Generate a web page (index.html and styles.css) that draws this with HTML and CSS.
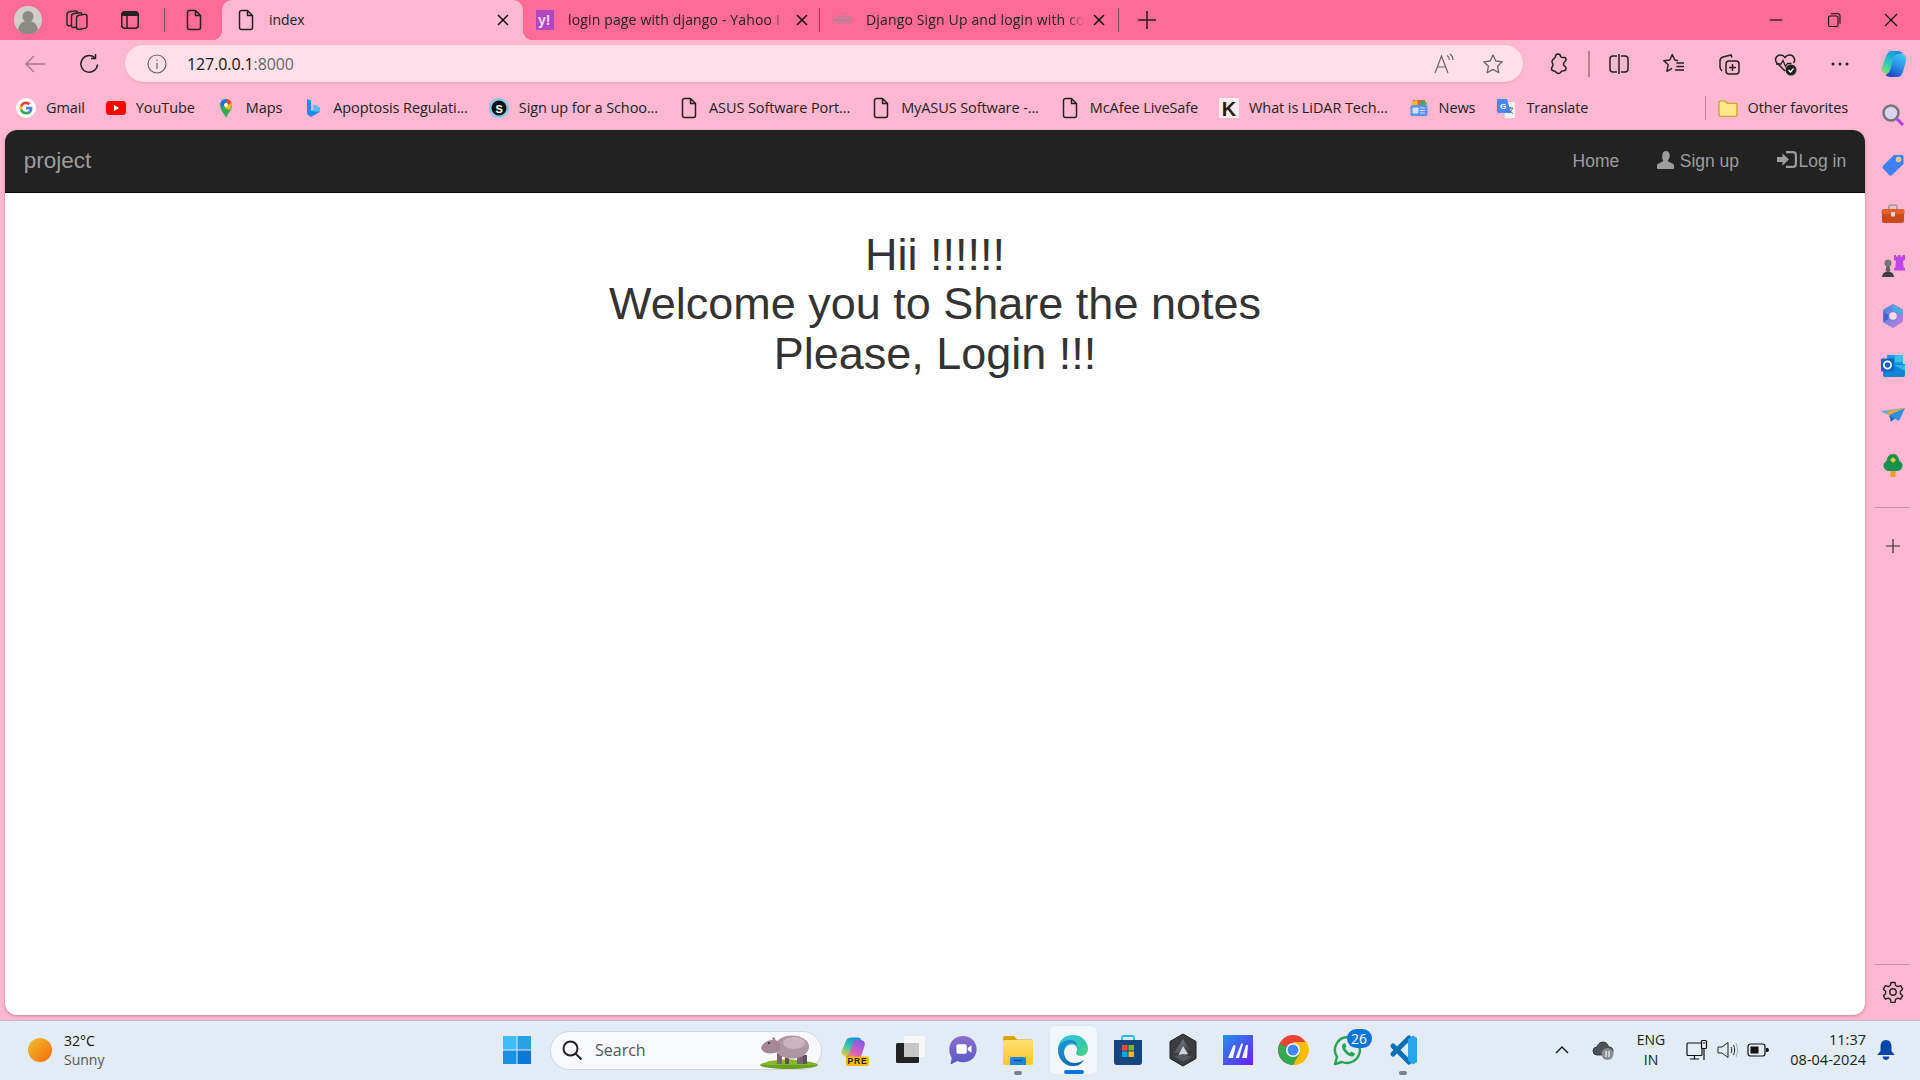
FILE: index.html
```html
<!DOCTYPE html>
<html lang="en">
<head>
<meta charset="utf-8">
<title>index</title>
<link rel="stylesheet" href="styles.css">
</head>
<body>
<svg class="defs" aria-hidden="true">
  <defs>
    <linearGradient id="gSun" x1="0" y1="0" x2="1" y2="1"><stop offset="0" stop-color="#f2c130"/><stop offset="1" stop-color="#f26a0c"/></linearGradient>
    <linearGradient id="gCopL" x1=".7" y1="0" x2=".2" y2="1"><stop offset="0" stop-color="#1a8fe0"/><stop offset=".55" stop-color="#2bc7c4"/><stop offset="1" stop-color="#7ee06a"/></linearGradient>
    <linearGradient id="gCopR" x1=".7" y1="0" x2=".2" y2="1"><stop offset="0" stop-color="#36c8ee"/><stop offset=".5" stop-color="#2b8ae6"/><stop offset="1" stop-color="#1c3fc0"/></linearGradient>
    <linearGradient id="gCopA" x1=".7" y1="0" x2=".1" y2="1"><stop offset="0" stop-color="#1a8fe0"/><stop offset=".5" stop-color="#36c8a8"/><stop offset="1" stop-color="#f4c83a"/></linearGradient>
    <linearGradient id="gCopC" x1=".8" y1="0" x2=".2" y2="1"><stop offset="0" stop-color="#7b5be6"/><stop offset=".6" stop-color="#d65fc0"/><stop offset="1" stop-color="#f08a70"/></linearGradient>
    <linearGradient id="gTeams" x1="0" y1="0" x2="0" y2="1"><stop offset="0" stop-color="#8a6fc8"/><stop offset="1" stop-color="#5a58c8"/></linearGradient>
    <linearGradient id="gEdge" x1="0" y1="0" x2="1" y2="1"><stop offset="0" stop-color="#35c1f1"/><stop offset=".55" stop-color="#35c8a8"/><stop offset="1" stop-color="#66d86a"/></linearGradient>
    <linearGradient id="gEdgeB" x1="0" y1="0" x2="1" y2="1"><stop offset="0" stop-color="#1f9be0"/><stop offset="1" stop-color="#0c59a4"/></linearGradient>
    <linearGradient id="gFold" x1="0" y1="0" x2="0" y2="1"><stop offset="0" stop-color="#ffe070"/><stop offset="1" stop-color="#fcc52c"/></linearGradient>
    <linearGradient id="gM" x1="0" y1="0" x2="1" y2="1"><stop offset="0" stop-color="#2590f0"/><stop offset="1" stop-color="#6a1ef0"/></linearGradient>
    <linearGradient id="gAsus" x1="0" y1="0" x2="1" y2="1"><stop offset="0" stop-color="#8a8e94"/><stop offset="1" stop-color="#2c2f33"/></linearGradient>
    <linearGradient id="gM365" x1="0" y1="0" x2="1" y2="1"><stop offset="0" stop-color="#3d8be0"/><stop offset="1" stop-color="#c67ae0"/></linearGradient>
    <symbol id="doc" viewBox="0 0 20 24"><path d="M3.500 4.500a2 2 0 0 1 2-2h6l5 5v12a2 2 0 0 1-2 2h-9a2 2 0 0 1-2-2zM11.500 2.500v5h5" fill="none" stroke="#222" stroke-width="1.500" stroke-linejoin="round"/></symbol>
    <symbol id="close" viewBox="0 0 20 20"><path d="M5 5l10 10M15 5L5 15" fill="none" stroke="#111" stroke-width="1.500"/></symbol>
  </defs>
</svg>

<header class="tabstrip">
  <div class="cell c-avatar">
    <svg class="i28" viewBox="0 0 28 28"><circle cx="14" cy="14" r="14" fill="#cfcfc8"/><circle cx="14" cy="10.500" r="5.500" fill="#8b8b86"/><path d="M4 24c1-7 5-9 10-9s9 2 10 9a14 14 0 0 1-20 0z" fill="#8b8b86"/></svg>
  </div>
  <div class="cell c-work">
    <svg class="i24" viewBox="0 0 24 24" fill="#ff6b99" stroke="#222" stroke-width="1.400"><g transform="skewY(-9)"><rect x="2" y="4.500" width="10.500" height="14" rx="2.500"/><rect x="6.500" y="7" width="10.500" height="14" rx="2.500"/><rect x="11.500" y="9.500" width="10.500" height="14" rx="2.500"/></g></svg>
  </div>
  <div class="cell c-tabs">
    <svg class="i22" viewBox="0 0 22 22"><rect x="2.750" y="2.750" width="16.500" height="16.500" rx="3" fill="none" stroke="#222" stroke-width="1.500"/><path d="M2.750 5.500a3 3 0 0 1 3-3h10.500a3 3 0 0 1 3 3V7H2.750z" fill="#222"/><path d="M8 7v12" stroke="#222" stroke-width="1.500"/></svg>
  </div>
  <span class="vline"></span>
  <div class="cell c-pin"><svg class="i-doc"><use href="#doc"/></svg></div>
  <div class="tab active">
    <svg class="i-doc"><use href="#doc"/></svg>
    <span class="tab-title">index</span>
    <svg class="i-close"><use href="#close"/></svg>
  </div>
  <div class="tab t2">
    <svg class="fav18" viewBox="0 0 18 20"><rect width="18" height="20" fill="#b146c2"/><text x="2" y="15" class="yahoo">y!</text></svg>
    <span class="tab-title fade">login page with django - Yahoo I</span>
    <svg class="i-close"><use href="#close"/></svg>
  </div>
  <div class="tab t3">
    <svg class="fav20" viewBox="0 0 20 20" fill="none" stroke="#a98794" stroke-width="1.500"><path d="M1 10h18M9.500 7.500C8 5.500 4 5.500 2.800 8c-1 2.500.5 5 3.200 5 2 0 3.500-1.500 3.500-3M10.500 7.500C12 5.500 16 5.500 17.200 8c1 2.500-.5 5-3.200 5-2 0-3.500-1.500-3.500-3"/></svg>
    <span class="tab-title fade">Django Sign Up and login with co</span>
    <svg class="i-close"><use href="#close"/></svg>
  </div>
  <div class="cell c-plus"><svg class="i22" viewBox="0 0 22 22"><path d="M11 2v18M2 11h18" stroke="#222" stroke-width="1.500"/></svg></div>
  <div class="win-controls">
    <div class="cell c-win"><svg class="i16" viewBox="0 0 16 16"><path d="M2 8h12" stroke="#111" stroke-width="1.200"/></svg></div>
    <div class="cell c-win"><svg class="i16" viewBox="0 0 16 16" fill="none" stroke="#111" stroke-width="1.100"><rect x="2.500" y="4" width="9.500" height="10.500" rx="1.500"/><path d="M5 1.800h7a2 2 0 0 1 2 2v8"/></svg></div>
    <div class="cell c-win"><svg class="i16" viewBox="0 0 16 16"><path d="M2 2l12 12M14 2L2 14" stroke="#111" stroke-width="1.200"/></svg></div>
  </div>
</header>

<nav class="toolbar">
  <div class="cell c-back"><svg class="i24" viewBox="0 0 24 24" fill="none" stroke="#a9798a" stroke-width="1.500"><path d="M22 12H3M11 4l-8 8 8 8"/></svg></div>
  <div class="cell c-reload"><svg class="i24" viewBox="0 0 24 24" fill="none" stroke="#222" stroke-width="1.500"><path d="M19.500 12.500a8.300 8.300 0 1 1-3-7M17.500 2v4.500H13"/></svg></div>
  <div class="address">
    <svg class="i22 info" viewBox="0 0 22 22" fill="none" stroke="#666" stroke-width="1.200"><circle cx="11" cy="11" r="9"/><path d="M11 10v6M11 6.500v1.500"/></svg>
    <span class="url">127.0.0.1<span class="port">:8000</span></span>
    <span class="grow"></span>
    <svg class="i24" viewBox="0 0 24 24" fill="none" stroke="#666" stroke-width="1.200"><path d="M3 21L9.500 4 16 21M5.300 15h8.500M15 3.500c1.500 1 2.500 2.500 2.500 4.500M18 2c2 1.500 3 3.500 3 6"/></svg>
    <svg class="i24 star" viewBox="0 0 24 24" fill="none" stroke="#666" stroke-width="1.300"><path d="M12 3l2.800 6 6.500.8-4.800 4.400 1.300 6.500L12 17.400l-5.800 3.300 1.300-6.500L2.700 9.800 9.200 9z" stroke-linejoin="round"/></svg>
  </div>
  <div class="cell c-ext"><svg class="i24" viewBox="0 0 24 24" fill="none" stroke="#222" stroke-width="1.500"><path d="M9.500 4.500a2.500 2.500 0 0 1 5 0c0 1 2.500 1 4 1 1.200 0 1.500 1 1.500 2 0 1.500-1 2-1.500 2.500a2.500 2.500 0 0 0 0 4c.8.600 1.500 1 1.500 2.500 0 2-2 2.500-4 2.500-1 0-1 2.500-3.500 2.500s-3-2.500-4-2.500c-1.500 0-3-.5-3-2.500 0-1.500 1.500-2 1.500-3.500S6 11 6 9.500c0-2.500 3.500-3 3.500-5z" stroke-linejoin="round"/></svg></div>
  <span class="vline v2"></span>
  <div class="cell c-tool"><svg class="i24" viewBox="0 0 24 24" fill="none" stroke="#222" stroke-width="1.500"><path d="M10 4H6a3 3 0 0 0-3 3v10a3 3 0 0 0 3 3h4M14 4h4a3 3 0 0 1 3 3v10a3 3 0 0 1-3 3h-4M12 2v20"/></svg></div>
  <div class="cell c-tool"><svg class="i24" viewBox="0 0 24 24" fill="none" stroke="#222" stroke-width="1.400"><path d="M16 8.700L12.800 8 10.300 2.500 7.800 8l-6 .8 4.400 4-1.300 6.500 5.200-3" stroke-linejoin="round"/><path d="M14.500 11h7.500M14.500 14.500h7.500M13 18h9"/></svg></div>
  <div class="cell c-tool"><svg class="i24" viewBox="0 0 24 24" fill="none" stroke="#222" stroke-width="1.500"><rect x="9" y="9" width="13" height="13" rx="3"/><path d="M15.500 12v7M12 15.500h7M15 5.500l-1-2.500-8 2c-2 .5-3 2-3 4v6c0 1.500 1 3 2 4"/></svg></div>
  <div class="cell c-tool"><svg class="i24" viewBox="0 0 24 24"><path d="M12 19L4 11c-3-3-1-8 3.500-8 2 0 3.500 1 4.500 2.500C13 4 14.500 3 16.500 3 21 3 23 8 20.500 11" fill="none" stroke="#222" stroke-width="1.500"/><path d="M3 12h5l2-3.500 2.500 6 2-3h4" fill="none" stroke="#222" stroke-width="1.300"/><circle cx="18" cy="18" r="5.500" fill="#222"/><path d="M15.500 18l2 2 3-3.500" fill="none" stroke="#fff" stroke-width="1.200"/></svg></div>
  <div class="cell c-tool"><svg class="i24" viewBox="0 0 24 24" fill="#222"><circle cx="5" cy="12" r="1.500"/><circle cx="12" cy="12" r="1.500"/><circle cx="19" cy="12" r="1.500"/></svg></div>
  <div class="cell c-copilot"><svg class="i30" viewBox="0 0 30 30"><path d="M19 2h-6c-3 0-5 2-6 5L3 18c-1 4 1 7 5 7h3c2 0 4-2 4.500-4l3-11c.8-3 2.500-5 5-6-1-1.300-2.500-2-4.500-2z" fill="url(#gCopL)"/><path d="M11 28h7c3 0 5-2 6-5l3-11c1-4-1-7-5-7h-3c-2 0-4 2-4.500 4l-3 11c-.8 3-2.500 5-5 6 1 1.300 3 2 5 2z" fill="url(#gCopR)"/></svg></div>
</nav>

<div class="content-row">
  <div class="content-col">
    <div class="bookmarks">
      <a class="bm"><svg class="fav" viewBox="0 0 20 20"><circle cx="10" cy="10" r="10" fill="#fff"/><path d="M16.400 10.200c0-.5 0-.9-.1-1.400H10v2.600h3.600c-.2.800-.6 1.500-1.300 2v1.700h2.100c1.300-1.200 2-2.900 2-4.900z" fill="#4285f4"/><path d="M10 16.500c1.800 0 3.300-.6 4.400-1.600l-2.100-1.700c-.6.400-1.300.6-2.300.6-1.700 0-3.200-1.200-3.700-2.700H4.100v1.700c1.100 2.200 3.300 3.700 5.900 3.700z" fill="#34a853"/><path d="M6.300 11.100c-.3-.7-.3-1.500 0-2.200V7.200H4.100c-.7 1.500-.7 4.100 0 5.600z" fill="#fbbc05"/><path d="M10 6.200c1 0 1.800.3 2.500 1l1.900-1.900C13.300 4.200 11.800 3.500 10 3.500c-2.600 0-4.800 1.500-5.900 3.700l2.200 1.700c.5-1.500 2-2.700 3.700-2.700z" fill="#ea4335"/></svg><span>Gmail</span></a>
      <a class="bm"><svg class="fav" viewBox="0 0 20 20"><rect y="3" width="20" height="14" rx="3.500" fill="#f00"/><path d="M8 7l5 3-5 3z" fill="#fff"/></svg><span>YouTube</span></a>
      <a class="bm"><svg class="fav" viewBox="0 0 20 20"><path d="M10 20C8 15 4 12 4 7a6 6 0 0 1 12 0c0 5-4 8-6 13z" fill="#34a853"/><path d="M4.600 4.500A6 6 0 0 1 10 1v4.500L6 9.500C5 8 4.300 6 4.600 4.500z" fill="#1a73e8"/><path d="M10 1a6 6 0 0 1 5.500 3.500L12 8z" fill="#ea4335"/><path d="M15.500 4.500c.8 2.500 0 4.500-2 7.500L8.500 10z" fill="#fbbc05"/><circle cx="10" cy="7" r="2" fill="#fff"/></svg><span>Maps</span></a>
      <a class="bm"><svg class="fav" viewBox="0 0 20 20"><path d="M4 1l4 1.500v10.500l4-2.300-2-1 1-3 6 3v4L8 19l-4-3z" fill="#1f8ce6"/><path d="M8 13l4-2.300-2-1 1-3 6 3v4z" fill="#4fc3f0"/></svg><span>Apoptosis Regulati...</span></a>
      <a class="bm"><svg class="fav" viewBox="0 0 20 20"><circle cx="10" cy="10" r="10" fill="#7ec8e8"/><circle cx="10" cy="10" r="7.500" fill="#111"/><text x="10" y="14.500" class="skool">S</text></svg><span>Sign up for a Schoo...</span></a>
      <a class="bm"><svg class="fav tall"><use href="#doc"/></svg><span>ASUS Software Port...</span></a>
      <a class="bm"><svg class="fav tall"><use href="#doc"/></svg><span>MyASUS Software -...</span></a>
      <a class="bm"><svg class="fav tall"><use href="#doc"/></svg><span>McAfee LiveSafe</span></a>
      <a class="bm"><svg class="fav" viewBox="0 0 20 20"><rect width="20" height="20" fill="#f7ecec"/><text x="10" y="17.500" class="kay">K</text></svg><span>What is LiDAR Tech...</span></a>
      <a class="bm"><svg class="fav" viewBox="0 0 20 20"><path d="M4 2h12v5H4z" fill="#ea5a47"/><path d="M2 4l6-2 1 5H3z" fill="#f1bc31"/><path d="M12 2l6 3-1 2h-6z" fill="#3ab05a"/><rect x="1.500" y="7" width="17" height="11" rx="1.500" fill="#5b92ee"/><path d="M4 10h5v5H4zM11 10h5M11 12.500h5M11 15h5" fill="#cfe0fb" stroke="#cfe0fb"/></svg><span>News</span></a>
      <a class="bm"><svg class="fav" viewBox="0 0 20 20"><path d="M7 4h12v16H9z" fill="#eceff3"/><path d="M1 1h10l4 14H3a2 2 0 0 1-2-2z" fill="#4a86ec"/><text x="7" y="11" class="gee">G</text><path d="M12 10h5M14.500 9v1.500M13 15c2-1 3-3 3.500-5M13.500 12c.5 1.500 2 3 3.500 3.500" fill="none" stroke="#666" stroke-width=".9"/></svg><span>Translate</span></a>
      <span class="grow"></span>
      <span class="vline v3"></span>
      <a class="bm last"><svg class="fav" viewBox="0 0 20 20"><path d="M1 4.500A1.500 1.500 0 0 1 2.500 3H7l2 2.200h8.500A1.500 1.500 0 0 1 19 6.700v10a1.500 1.500 0 0 1-1.500 1.500h-15A1.500 1.500 0 0 1 1 16.700z" fill="#fde78b" stroke="#c8951b" stroke-width="1.100"/></svg><span>Other favorites</span></a>
    </div>
    <main class="page">
      <div class="navbar">
        <a class="brand">project</a>
        <span class="grow"></span>
        <a class="nav-link">Home</a>
        <a class="nav-link"><svg class="glyph g-user" viewBox="0 0 18 18" fill="#9d9d9d"><path d="M9 0c2.400 0 3.700 2 3.700 4.500 0 2-.7 3.700-1.700 4.700-.4.400-.3 1.100.3 1.400l4.200 2c1 .5 1.500 1.200 1.500 2.400v2.500c0 .3-.2.500-.5.500H.5c-.3 0-.5-.2-.5-.5V15c0-1.200.5-1.900 1.500-2.400l4.200-2c.6-.3.700-1 .3-1.400C5 8.200 5.300 6.500 5.300 4.500 5.300 2 6.600 0 9 0z"/></svg>Sign up</a>
        <a class="nav-link"><svg class="glyph g-login" viewBox="0 0 20 17" fill="#9d9d9d"><path d="M0 6h5.500V2.500L12 8.500l-6.500 6V11H0z"/><path d="M9 0h7a4 4 0 0 1 4 4v9a4 4 0 0 1-4 4H9v-2.200h7a1.800 1.800 0 0 0 1.800-1.800V4A1.800 1.800 0 0 0 16 2.200H9z"/></svg>Log in</a>
      </div>
      <h1 class="welcome">Hii !!!!!!<br>Welcome you to Share the notes<br>Please, Login !!!</h1>
    </main>
  </div>
  <aside class="sidebar">
    <div class="cell side"><svg class="i26" viewBox="0 0 26 26"><circle cx="11" cy="11" r="7.500" fill="#dcd4ee" stroke="#75757d" stroke-width="2.500"/><path d="M17 17l6 6" stroke="#b23fe6" stroke-width="3"/></svg></div>
    <div class="cell side"><svg class="i26" viewBox="0 0 26 26"><path d="M14 3h8a1.500 1.500 0 0 1 1.500 1.500V12L12 23a2 2 0 0 1-2.800 0L3 16.500a2 2 0 0 1 0-2.800z" fill="#3f7ff0"/><circle cx="18.500" cy="7.500" r="2.400" fill="#f5c33b" stroke="#dbe6ff" stroke-width=".7"/></svg></div>
    <div class="cell side"><svg class="i26" viewBox="0 0 26 26"><path d="M9 7V4.500A1.500 1.500 0 0 1 10.500 3h5A1.500 1.500 0 0 1 17 4.500V7" fill="none" stroke="#9a9a9a" stroke-width="1.600"/><path d="M1.500 9A2 2 0 0 1 3.500 7h19a2 2 0 0 1 2 2v3h-23z" fill="#e3602a"/><path d="M2 12h22v7a2 2 0 0 1-2 2H4a2 2 0 0 1-2-2z" fill="#c94a1c"/><rect x="11" y="10" width="4" height="4.500" rx=".8" fill="#d8d8d8"/></svg></div>
    <div class="cell side"><svg class="i26" viewBox="0 0 26 26"><path d="M14 2h2v1.500h2V2h2.500v1.500h2V2H25v5l-2 1 .8 7H25v2.500H14V15h1.200L16 8l-2-1z" fill="#c044ea"/><circle cx="8" cy="10" r="3.500" fill="#75757a"/><path d="M6.500 13h3l1 5h-5z" fill="#5f6064"/><path d="M2 24c0-3 2-5 6-6 4 1 6 3 6 6z" fill="#3d3e42"/></svg></div>
    <div class="cell side"><svg class="i26" viewBox="0 0 26 26"><path d="M13 1.500l9.500 5v12L13 24.500 3.500 19V7z" fill="url(#gM365)" stroke="url(#gM365)" stroke-width="1" stroke-linejoin="round"/><path d="M13 2l9 5v5l-9-4.500z" fill="#3fb3dd"/><path d="M3.500 9l5 3v4l-5 3z" fill="#2d6fd0"/><circle cx="13" cy="13" r="3.800" fill="#fdd8e6"/></svg></div>
    <div class="cell side"><svg class="i26" viewBox="0 0 26 26"><rect x="7" y="2" width="16" height="11" fill="#1a9be0"/><rect x="15" y="2" width="8" height="7" fill="#38c0ee"/><path d="M3 11l12 0 10 0v11a2 2 0 0 1-2 2H5.500A2 2 0 0 1 3 22z" fill="#1085d6"/><path d="M14 12l11 6v-6z" fill="#36b0ea"/><rect x="1" y="5.500" width="13" height="13" rx="1.500" fill="#0a64c0"/><circle cx="7.500" cy="12" r="3.600" fill="none" stroke="#fff" stroke-width="1.700"/></svg></div>
    <div class="cell side"><svg class="i26" viewBox="0 0 26 26"><path d="M1 8l24-3-16 7z" fill="#41aef0"/><path d="M25 5L9 12l10 6z" fill="#2a8fe0"/><path d="M6 8.500L25 5 9 12z" fill="#f2a32c"/><path d="M9 12l2 7 4-3.500z" fill="#1c6fc8"/></svg></div>
    <div class="cell side"><svg class="i26" viewBox="0 0 26 26"><rect x="10.500" y="17" width="5" height="7" rx="1" fill="#f09a20"/><path d="M13 1c4 0 6 3.500 6.500 7 2 1 3 3 3 4.500 0 3-2.500 5.500-5.500 5.500H9c-3 0-5.500-2.500-5.500-5.500 0-1.500 1-3.500 3-4.500C7 4.500 9 1 13 1z" fill="#179150"/><path d="M13 4l1.500 1.500L16 7l-1.500 1.500L13 10l-1.500-1.500L10 7l1.500-1.500z" fill="#f5c332"/></svg></div>
    <span class="hline first"></span>
    <div class="cell side add"><svg class="i16" viewBox="0 0 16 16"><path d="M8 1v14M1 8h14" stroke="#333" stroke-width="1.200"/></svg></div>
    <span class="grow"></span>
    <span class="hline"></span>
    <div class="cell side gear"><svg class="i24" viewBox="0 0 24 24" fill="none" stroke="#222" stroke-width="1.400"><circle cx="12" cy="12" r="3.200"/><path d="M10 2.500h4l.6 3 2.200 1.200 2.800-1 2 3.500-2.200 2v2.500l2.200 2-2 3.500-2.800-1-2.200 1.200-.6 3h-4l-.6-3-2.200-1.200-2.800 1-2-3.500 2.200-2v-2.500l-2.200-2 2-3.500 2.800 1 2.200-1.200z" stroke-linejoin="round"/></svg></div>
  </aside>
</div>

<footer class="taskbar">
  <div class="weather">
    <svg class="i24" viewBox="0 0 24 24"><circle cx="12" cy="12" r="12" fill="url(#gSun)"/></svg>
    <div class="two-line"><span class="dark">32°C</span><span class="muted">Sunny</span></div>
  </div>
  <div class="start"><svg class="i30" viewBox="0 0 30 30"><rect x="1" y="1" width="13.500" height="13.500" fill="#40bdf7"/><rect x="15.500" y="1" width="13.500" height="13.500" fill="#2aa0e8"/><rect x="1" y="15.500" width="13.500" height="13.500" fill="#1a92e4"/><rect x="15.500" y="15.500" width="13.500" height="13.500" fill="#0a78d4"/></svg></div>
  <div class="search">
    <svg class="i22" viewBox="0 0 22 22" fill="none" stroke="#222" stroke-width="2"><circle cx="9.500" cy="9.500" r="7"/><path d="M14.500 14.500l6 6"/></svg>
    <span class="search-text">Search</span>
    <span class="grow"></span>
    <svg class="hippo" viewBox="0 0 60 36"><ellipse cx="30" cy="32" rx="29" ry="4" fill="#6aa022"/><path d="M2 32l8-4 20-2 22 3 6 3z" fill="#86b82e"/><rect x="18" y="20" width="5" height="11" fill="#7b6470"/><rect x="38" y="20" width="6" height="11" fill="#7b6470"/><rect x="26" y="22" width="4" height="9" fill="#66505c"/><rect x="44" y="22" width="4" height="9" fill="#66505c"/><ellipse cx="33" cy="14" rx="17" ry="11.500" fill="#b096a2"/><ellipse cx="35" cy="10" rx="11" ry="6" fill="#cdb4bf"/><path d="M2 15c1-4 5-7 10-8 4-1 8 1 9 5 1 5-2 8-6 8-4 1-11 1-13-5z" fill="#a58796"/><circle cx="10" cy="10" r="1" fill="#222"/><path d="M13 6l2-2 1.500 3z" fill="#7b6470"/></svg>
  </div>
  <div class="tb-icons">
    <div class="cell tb"><svg class="i36" viewBox="0 0 36 36"><g transform="translate(4 4) scale(.95 .8)"><path d="M19 2h-6c-3 0-5 2-6 5L3 18c-1 4 1 7 5 7h3c2 0 4-2 4.500-4l3-11c.8-3 2.500-5 5-6-1-1.300-2.500-2-4.500-2z" fill="url(#gCopA)"/><path d="M11 28h7c3 0 5-2 6-5l3-11c1-4-1-7-5-7h-3c-2 0-4 2-4.500 4l-3 11c-.8 3-2.500 5-5 6 1 1.300 3 2 5 2z" fill="url(#gCopC)"/></g><rect x="11" y="24.500" width="23" height="9.500" rx="2" fill="#fbb90f"/><text x="22.500" y="32.300" class="pre">PRE</text></svg></div>
    <div class="cell tb"><svg class="i34" viewBox="0 0 34 34"><rect x="5" y="10" width="23" height="20" rx="1.500" fill="#222"/><rect x="13" y="3" width="21" height="21" rx="1.500" fill="#f8f8f8"/><rect x="13" y="10" width="15" height="14" rx="1" fill="#c6c6c6"/></svg></div>
    <div class="cell tb"><svg class="i32" viewBox="0 0 34 34"><path d="M17 2c8.500 0 14.500 6 14.500 14S25.500 30 17 30c-2 0-4-.4-6-1.300L5 32c-.6.300-1.200-.2-1-.9l1-5.600C3.500 23 2.500 20 2.500 16 2.500 8 8.500 2 17 2z" fill="url(#gTeams)"/><rect x="10" y="11" width="11" height="10" rx="2" fill="#fff"/><path d="M22 15l4-3v8l-4-3z" fill="#fff"/></svg></div>
    <div class="cell tb"><svg class="i34" viewBox="0 0 34 34"><path d="M2 5a2 2 0 0 1 2-2h9l3 3.500h14a2 2 0 0 1 2 2V10H2z" fill="#dba30f"/><rect x="2" y="7" width="30" height="25" rx="1.500" fill="url(#gFold)"/><path d="M9 26a2 2 0 0 1 2-2h12a2 2 0 0 1 2 2v6H9z" fill="#1a87d6"/><path d="M13 27.500h8" stroke="#0b4f90" stroke-width="1.300"/></svg><span class="run-dot"></span></div>
    <div class="cell tb selected"><svg class="i32" viewBox="0 0 32 32"><path d="M16 1C24 1 31 7 31 15c0 4-3 7-7 7-3 0-5-1-5-3 0-1 1-1.500 1-3.500 0-3-2-5-5-5-5 0-8 4-8 9 0 7 5 12 11 13C9 33 1 26 1 16 1 7 7 1 16 1z" fill="url(#gEdge)"/><path d="M1 16c0-6 6-10 12-10 5 0 7 3 7 6-2-2-3-3-5-3-5 0-8 4-8 9 0 5 3 11 11 11 3 0 6-1 9-3-3 5-7 6-11 6C8 32 1 25 1 16z" fill="url(#gEdgeB)"/></svg><span class="run-bar"></span></div>
    <div class="cell tb"><svg class="i32" viewBox="0 0 32 32"><path d="M10 7V3.500A1.500 1.500 0 0 1 11.500 2h9A1.500 1.500 0 0 1 22 3.500V7" fill="none" stroke="#2bbdf0" stroke-width="1.800"/><path d="M2 6h28v22a3 3 0 0 1-3 3H5a3 3 0 0 1-3-3z" fill="#15467f"/><rect x="10" y="11" width="5.500" height="5.500" fill="#f25022"/><rect x="16.500" y="11" width="5.500" height="5.500" fill="#7fba00"/><rect x="10" y="17.500" width="5.500" height="5.500" fill="#00a4ef"/><rect x="16.500" y="17.500" width="5.500" height="5.500" fill="#ffb900"/></svg></div>
    <div class="cell tb"><svg class="i34" viewBox="0 0 34 34"><path d="M17 1l13 7.500v17L17 33 4 25.500v-17z" fill="#3a3c40" stroke="#1e2023" stroke-width="1"/><path d="M17 6l9 14H8z" fill="url(#gAsus)"/><path d="M17 13l5 8-10 2z" fill="#d0d2d5"/><path d="M8 23l9-2 9 3-9 5z" fill="#54575c"/></svg></div>
    <div class="cell tb"><svg class="i30" viewBox="0 0 30 30"><rect width="30" height="30" fill="url(#gM)"/><path d="M5 23l5-12c1-2 3-1 2.500 1L10 23zM12.500 23l6-15 1.500 1-4 14zM19 23l4-13h2l-1 13z" fill="#f2f5ff"/></svg></div>
    <div class="cell tb"><svg class="i32" viewBox="0 0 32 32"><circle cx="16" cy="16" r="15" fill="#ea4335"/><path d="M16 16L2.500 9.500A15 15 0 0 0 16 31l7-12z" fill="#34a853"/><path d="M16 8h13.500A15 15 0 0 1 16 31l7-12z" fill="#fbbc05"/><circle cx="16" cy="16" r="7" fill="#fff"/><circle cx="16" cy="16" r="5.500" fill="#4285f4"/></svg></div>
    <div class="cell tb"><svg class="i32" viewBox="0 0 32 32" fill="none"><path d="M16 3a13 13 0 0 0-11 20l-2 7 7-2A13 13 0 1 0 16 3z" stroke="#27a553" stroke-width="2.400" stroke-linejoin="round"/><path d="M11 10c-2 2-1 5 2 8.500s6.500 5 9 3.500l1-2.500-3.500-2-1.500 1.500c-1.500-.5-4-3-5-5l1.500-1.500-1.500-3.500z" fill="#27a553"/></svg><span class="badge">26</span></div>
    <div class="cell tb"><svg class="i32" viewBox="0 0 32 32"><path d="M22 4L6 20M6 12l16 16" fill="none" stroke="#0a70b8" stroke-width="5" stroke-linecap="round"/><path d="M21 5l5-3.500 4 2.500v24l-4 2.500-5-3.500z" fill="#28a4ec"/></svg><span class="run-dot"></span></div>
  </div>
  <span class="grow"></span>
  <div class="tray">
    <div class="cell t-chev"><svg class="i16" viewBox="0 0 16 16"><path d="M2 11l6-6 6 6" fill="none" stroke="#111" stroke-width="1.400"/></svg></div>
    <div class="cell t-cloud"><svg class="i22" viewBox="0 0 22 22"><path d="M5 16a4 4 0 0 1 0-8c.8-3 3-5 6-5 3 0 5 2 5.500 5a4 4 0 0 1 1 8z" fill="#4f5358" stroke="#222" stroke-width=".8"/><circle cx="15.500" cy="15" r="6" fill="#8a8d91"/><path d="M14 12v6M17 12v6" stroke="#fff" stroke-width="1.100"/></svg></div>
    <div class="two-line t-lang"><span>ENG</span><span>IN</span></div>
    <div class="cell t-net"><svg class="i24" viewBox="0 0 24 24" fill="none" stroke="#111" stroke-width="1.200"><rect x="2" y="5" width="15" height="12.500" rx="1"/><path d="M9.500 17.500V21M5 21h9"/><rect x="16.500" y="2.500" width="5" height="8" rx="1" fill="#e3ebf5"/><path d="M19 10.500V22M17.800 5h2.400"/></svg></div>
    <div class="cell t-vol"><svg class="i22" viewBox="0 0 22 22" fill="none" stroke="#222" stroke-width="1"><path d="M2 8h4l6-4.500v15L6 14H2z"/><path d="M15 8c1 2 1 4 0 6M17.500 6c1.500 3 1.500 7 0 10"/><path d="M20 4c2 4 2 10 0 14" stroke="#aaa"/></svg></div>
    <div class="cell t-bat"><svg class="i22" viewBox="0 0 22 22"><rect x="1" y="5" width="17" height="12" rx="2.500" fill="none" stroke="#111" stroke-width="1.200"/><rect x="3.500" y="7.500" width="8" height="7" fill="#111"/><path d="M19 9h1a1.500 1.500 0 0 1 0 4h-1z" fill="#111"/></svg></div>
    <div class="two-line t-clock"><span>11:37</span><span>08-04-2024</span></div>
    <div class="cell t-bell"><svg class="i22" viewBox="0 0 20 20"><path d="M10 1c3 0 5 2.500 5 6v4l3 3.500H2L5 11V7c0-3.500 2-6 5-6z" fill="#0a46a8"/><path d="M7 16h6a3 3 0 0 1-6 0z" fill="#0a46a8"/></svg></div>
  </div>
</footer>
</body>
</html>
```

FILE: styles.css
```css
* { box-sizing: border-box; }
html, body { margin: 0; padding: 0; }
body {
  width: 1920px;
  height: 1080px;
  overflow: hidden;
  background: #fdb7d0;
  color: #111;
  font-family: "Open Sans", "Noto Sans", sans-serif;
  display: flex;
  flex-direction: column;
}
.defs { position: absolute; width: 0; height: 0; }
svg { display: block; flex: none; }
.grow { flex: 1 1 auto; }
.cell { display: flex; align-items: center; justify-content: center; flex: none; position: relative; }

.i16 { width: 16px; height: 16px; }
.i20 { width: 20px; height: 20px; }
.i22 { width: 22px; height: 22px; }
.i24 { width: 24px; height: 24px; }
.i26 { width: 26px; height: 26px; }
.i28 { width: 28px; height: 28px; }
.i30 { width: 30px; height: 30px; }
.i32 { width: 32px; height: 32px; }
.i34 { width: 34px; height: 34px; }
.i36 { width: 36px; height: 36px; }
.i-doc { width: 20px; height: 24px; }
.i-close { width: 20px; height: 20px; }
.fav18 { width: 18px; height: 20px; }
.fav20 { width: 20px; height: 20px; }

/* tab strip */
.tabstrip { height: 40px; background: #ff6b99; display: flex; align-items: stretch; flex: none; }
.tabstrip > .cell { height: 40px; }
.c-avatar { width: 56px; }
.c-work { width: 42px; }
.c-tabs { width: 64px; }
.vline { width: 1px; background: #8c4a60; height: 24px; align-self: center; flex: none; }
.tabstrip > .vline { margin-left: 2px; }
.c-pin { width: 57px; }
.tab { display: flex; align-items: center; flex: none; height: 40px; font-size: 14px; color: #222; }
.tab.active {
  width: 301px;
  background: #fdb7d0;
  border-radius: 10px 10px 0 0;
  padding: 0 10px 0 14px;
  position: relative;
}
.tab.active::before, .tab.active::after {
  content: "";
  position: absolute;
  bottom: 0;
  width: 10px;
  height: 10px;
  background: radial-gradient(circle at 0 0, #ff6b99 10px, #fdb7d0 10.5px);
}
.tab.active::before { left: -10px; }
.tab.active::after { right: -10px; background: radial-gradient(circle at 100% 0, #ff6b99 10px, #fdb7d0 10.5px); }
.tab.active .tab-title { margin-left: 13px; flex: 1; letter-spacing: -.1px; }
.tab-title { white-space: nowrap; padding-bottom: 2px; letter-spacing: .15px; }
.fade {
  width: 219px;
  flex: none;
  -webkit-mask-image: linear-gradient(to right, #000 92%, transparent 100%);
  mask-image: linear-gradient(to right, #000 92%, transparent 100%);
}
.t2 { width: 297px; padding-left: 13px; position: relative; }
.t2 .tab-title { margin-left: 14px; }
.t2 .i-close { margin-left: 5px; }
.t3 { width: 299px; padding-left: 13px; position: relative; }
.t3 .tab-title { margin-left: 13px; width: 218px; }
.t3 .i-close { margin-left: 5px; }
.t2::after, .t3::after {
  content: "";
  position: absolute;
  right: 0;
  top: 8px;
  height: 24px;
  width: 1px;
  background: #8c4a60;
}
.c-plus { width: 56px; }
.win-controls { margin-left: auto; display: flex; }
.c-win { width: 57.500px; height: 40px; }
.yahoo { font: bold 14px "Liberation Sans", sans-serif; fill: #f0dcf4; }

/* toolbar */
.toolbar { height: 45px; padding: 5px 0 3px; display: flex; align-items: center; flex: none; }
.c-back { width: 70px; }
.c-reload { width: 40px; }
.address {
  width: 1398px;
  height: 37px;
  margin-left: 15px;
  border-radius: 19px;
  background: #ffe0ea;
  display: flex;
  align-items: center;
  padding: 0 18px 0 21px;
  flex: none;
  box-shadow: 0 1px 2px rgba(150, 60, 90, .15);
}
.url { margin-left: 19px; font-size: 16px; color: #111; letter-spacing: -.1px; }
.port { color: #666; }
.star { margin-left: 25px; }
.c-ext { width: 50px; margin-left: 10px; }
.v2 { height: 26px; background: #b97f93; width: 2px; margin-left: 5px; }
.c-tool { width: 55.300px; }
.v2 + .c-tool { margin-left: 1px; }
.c-copilot { width: 50px; margin-left: 2px; }

/* body */
.content-row { height: 930px; display: flex; flex: none; }
.content-col { width: 1865px; display: flex; flex-direction: column; padding-left: 5px; }

/* bookmarks */
.bookmarks { height: 45px; display: flex; align-items: center; padding-left: 11px; padding-right: 17px; flex: none; }
.bm { display: flex; align-items: center; font-size: 14.500px; color: #222; margin-right: 21px; white-space: nowrap; letter-spacing: -.1px; }
.bm.last { margin-right: 0; }
.fav { width: 20px; height: 20px; margin-right: 10px; }
.fav.tall { height: 24px; }
.v3 { height: 24px; background: #c9879e; margin-right: 12px; }
.skool { font: bold 11px "Liberation Sans", sans-serif; fill: #fff; text-anchor: middle; }
.kay { font: bold 20px "Liberation Sans", sans-serif; fill: #2e1a12; text-anchor: middle; }
.gee { font: bold 8px "Liberation Sans", sans-serif; fill: #fff; text-anchor: middle; }

/* page */
.page {
  width: 1860px;
  height: 885px;
  background: #fff;
  border-radius: 12px;
  overflow: hidden;
  flex: none;
  box-shadow: 0 1px 3px rgba(150, 60, 90, .45);
  font-family: "Liberation Sans", Arial, sans-serif;
}
.navbar { height: 63px; background: #222; border-bottom: 1px solid #080808; display: flex; align-items: center; color: #9d9d9d; }
.brand { font-size: 22.500px; padding: 0 18.750px; }
.nav-link { display: flex; align-items: center; font-size: 17.500px; padding: 0 18.750px; }
.glyph { margin-top: -3px; }
.g-user { width: 18px; height: 18px; margin-right: 5px; }
.g-login { width: 20px; height: 17px; margin-right: 2px; }
.welcome { margin: 36.500px 0 0; font-size: 45px; font-weight: 400; line-height: 49.500px; text-align: center; color: #333; }

/* sidebar */
.sidebar { width: 55px; display: flex; flex-direction: column; align-items: center; padding-top: 5px; }
.side { width: 55px; height: 50.200px; }
.hline { width: 35px; height: 1px; background: #b99aa5; flex: none; }
.hline.first { margin-top: 15.500px; }
.add { margin-top: 13px; }
.gear { margin-top: 4px; height: 46px; }

/* taskbar */
.taskbar {
  height: 60px;
  margin-top: 5px;
  padding-bottom: 1px;
  background: #e3ebf5;
  border-top: 1px solid #b9c0cc;
  display: flex;
  align-items: center;
  flex: none;
  font-size: 14px;
}
.weather { width: 502px; padding-left: 28px; display: flex; align-items: center; gap: 12px; flex: none; }
.two-line { display: flex; flex-direction: column; line-height: 20px; }
.weather .two-line { line-height: 19.500px; }
.dark { color: #111; }
.muted { color: #555; }
.start { width: 48px; flex: none; }
.search {
  width: 272px;
  height: 39px;
  border-radius: 20px;
  background: #f7f9fd;
  border: 1px solid #d0d6e0;
  display: flex;
  align-items: center;
  padding: 0 2px 0 10px;
  flex: none;
}
.search-text { margin-left: 12px; font-size: 16px; color: #555; }
.hippo { width: 60px; height: 36px; margin-top: 1px; }
.tb-icons { display: flex; margin-left: 3.500px; flex: none; }
.tb { width: 55px; height: 48px; }
.selected { background: #f3f6fb; border-radius: 5px; box-shadow: 0 0 0 .5px #dfe4ec; width: 47px; margin: 0 4px; }
.run-dot { position: absolute; bottom: -1px; left: 50%; margin-left: -4px; width: 8px; height: 4px; border-radius: 2px; background: #7a7f88; }
.run-bar { position: absolute; bottom: 0; left: 14px; width: 20px; height: 4px; border-radius: 2px; background: #0a74d8; }
.badge {
  position: absolute;
  top: 3px;
  right: 4px;
  width: 25px;
  height: 19px;
  border-radius: 10px;
  background: #0a74d8;
  color: #fff;
  font-size: 14px;
  line-height: 19px;
  text-align: center;
}
.pre { font: bold 8.500px "Liberation Sans", sans-serif; letter-spacing: .8px; fill: #222; text-anchor: middle; }
.tray { display: flex; align-items: center; padding-right: 14px; flex: none; }
.t-chev { width: 40px; }
.t-cloud { width: 41px; }
.t-lang { width: 48px; margin-left: 4px; text-align: center; color: #222; }
.t-net { width: 30px; margin-left: 7px; }
.t-vol { width: 30px; }
.t-bat { width: 32px; }
.t-clock { width: 92px; text-align: right; color: #222; font-size: 14.500px; }
.t-bell { width: 40px; }
```
